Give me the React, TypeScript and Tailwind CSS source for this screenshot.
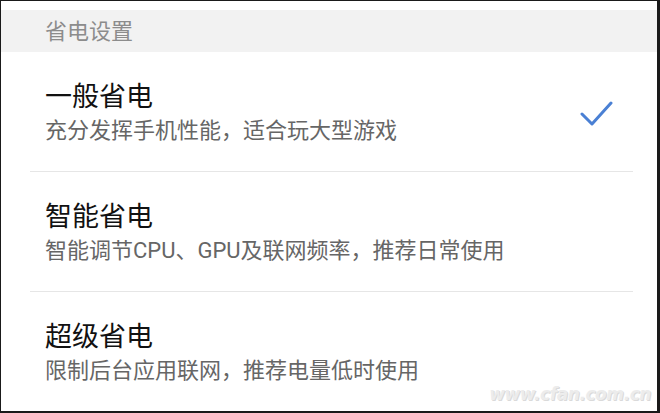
import React from 'react';

const options = [
    { title: '一般省电', desc: '充分发挥手机性能，适合玩大型游戏', checked: true },
    { title: '智能省电', desc: '智能调节CPU、GPU及联网频率，推荐日常使用', checked: false },
    { title: '超级省电', desc: '限制后台应用联网，推荐电量低时使用', checked: false },
];

const font = { fontFamily: 'Roboto, "Noto Sans CJK SC", sans-serif' };

export default function App() {
    return (
        <div className="w-[660px] h-[413px] bg-[#1a1a1a] pl-px pt-px">
            <div className="relative w-[656px] h-[410px] bg-white overflow-hidden" style={font}>
                <div className="pt-[9px]">
                    <div className="h-[42px] bg-[#f2f2f2] flex items-center pl-[44px] text-[22px] text-[#8c8c8c]">
                        省电设置
                    </div>
                </div>

                {options.map((o, i) => (
                    <div key={i} className="ml-[29px] mr-[24px]">
                        <div className="h-[119px] flex items-center">
                            <div className="flex-1 pl-[15px] pt-[2px]">
                                <div className="text-[27px] leading-[36px] text-[#111]">{o.title}</div>
                                <div className="text-[22px] leading-[32px] text-[#666]">{o.desc}</div>
                            </div>
                            {o.checked && (
                                <svg width="34" height="28" viewBox="0 0 34 28" className="mr-[20px] mt-[6px]">
                                    <polyline points="3,13 13,23 32,2" fill="none" stroke="#4a80d4" strokeWidth="3" strokeLinecap="round" strokeLinejoin="round" />
                                </svg>
                            )}
                        </div>
                        {i < options.length - 1 && <div className="h-px bg-[#e6e6e6]" />}
                    </div>
                ))}

                <div className="absolute right-[6px] bottom-[4px] text-[17px] italic font-bold text-[#ececec] tracking-tight" style={{ fontFamily: '"DejaVu Sans", sans-serif', textShadow: '1px 1px 0 #dadada' }}>
                    www.cfan.com.cn
                </div>
            </div>
        </div>
    );
}
